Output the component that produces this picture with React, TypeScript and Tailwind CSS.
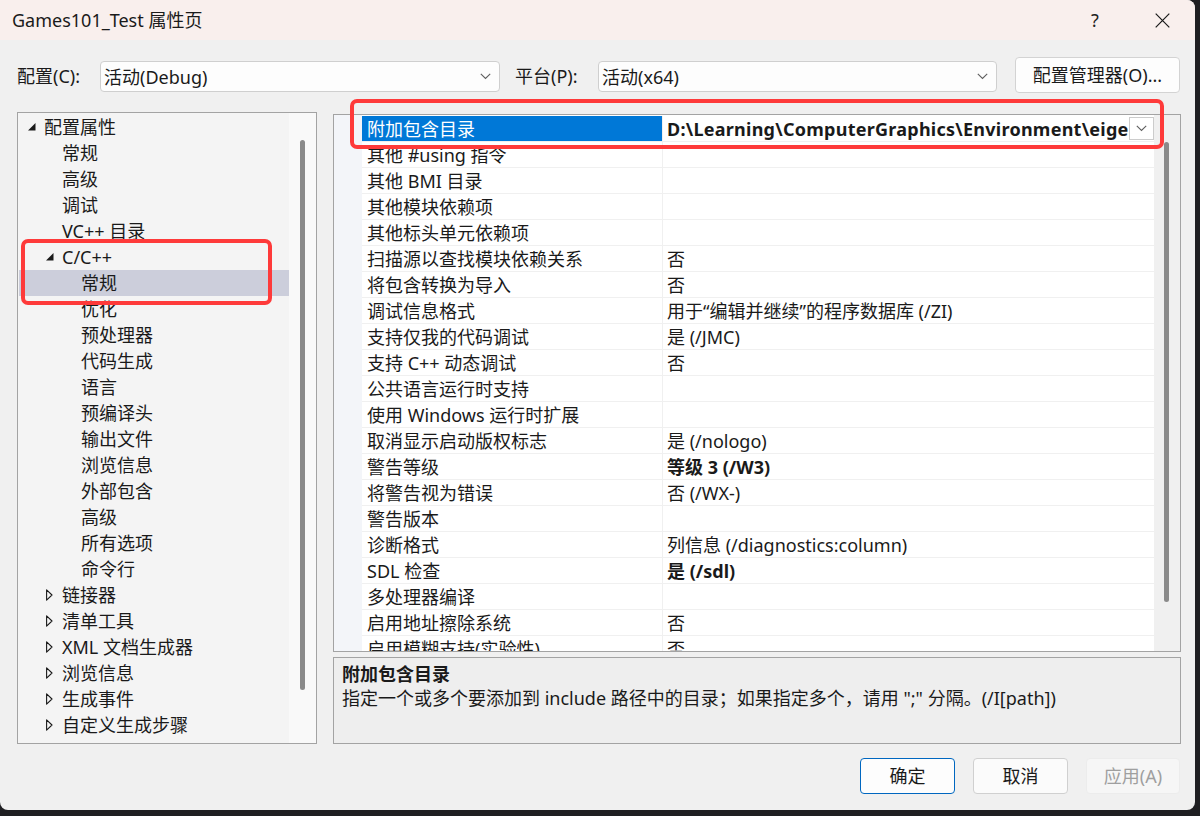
import React from 'react';

const F = "font-['Noto_Sans','Noto_Sans_CJK_SC',sans-serif]";

type TreeRow = { text: string; level: 0 | 1 | 2; icon?: 'open' | 'closed'; selected?: boolean };

const treeRows: TreeRow[] = [
  { text: '配置属性', level: 0, icon: 'open' },
  { text: '常规', level: 1 },
  { text: '高级', level: 1 },
  { text: '调试', level: 1 },
  { text: 'VC++ 目录', level: 1 },
  { text: 'C/C++', level: 1, icon: 'open' },
  { text: '常规', level: 2, selected: true },
  { text: '优化', level: 2 },
  { text: '预处理器', level: 2 },
  { text: '代码生成', level: 2 },
  { text: '语言', level: 2 },
  { text: '预编译头', level: 2 },
  { text: '输出文件', level: 2 },
  { text: '浏览信息', level: 2 },
  { text: '外部包含', level: 2 },
  { text: '高级', level: 2 },
  { text: '所有选项', level: 2 },
  { text: '命令行', level: 2 },
  { text: '链接器', level: 1, icon: 'closed' },
  { text: '清单工具', level: 1, icon: 'closed' },
  { text: 'XML 文档生成器', level: 1, icon: 'closed' },
  { text: '浏览信息', level: 1, icon: 'closed' },
  { text: '生成事件', level: 1, icon: 'closed' },
  { text: '自定义生成步骤', level: 1, icon: 'closed' },
];

const levelPad: Record<number, string> = { 0: 'pl-[9px]', 1: 'pl-[27px]', 2: 'pl-[46px]' };

type PropRow = { name: string; value?: string; bold?: boolean };

const propRows: PropRow[] = [
  { name: '附加包含目录', value: 'D:\\Learning\\ComputerGraphics\\Environment\\eigen', bold: true },
  { name: '其他 #using 指令' },
  { name: '其他 BMI 目录' },
  { name: '其他模块依赖项' },
  { name: '其他标头单元依赖项' },
  { name: '扫描源以查找模块依赖关系', value: '否' },
  { name: '将包含转换为导入', value: '否' },
  { name: '调试信息格式', value: '用于“编辑并继续”的程序数据库 (/ZI)' },
  { name: '支持仅我的代码调试', value: '是 (/JMC)' },
  { name: '支持 C++ 动态调试', value: '否' },
  { name: '公共语言运行时支持' },
  { name: '使用 Windows 运行时扩展' },
  { name: '取消显示启动版权标志', value: '是 (/nologo)' },
  { name: '警告等级', value: '等级 3 (/W3)', bold: true },
  { name: '将警告视为错误', value: '否 (/WX-)' },
  { name: '警告版本' },
  { name: '诊断格式', value: '列信息 (/diagnostics:column)' },
  { name: 'SDL 检查', value: '是 (/sdl)', bold: true },
  { name: '多处理器编译' },
  { name: '启用地址擦除系统', value: '否' },
  { name: '启用模糊支持(实验性)', value: '否' },
];

function Chevron() {
  return (
    <svg width="11" height="7" viewBox="0 0 11 7" fill="none">
      <path d="M0.8 0.8 L5.5 5.5 L10.2 0.8" stroke="#5f5f5f" strokeWidth="1.1" />
    </svg>
  );
}

function OpenTri() {
  return (
    <svg width="8" height="8" viewBox="0 0 8 8">
      <polygon points="0,7.5 7.5,7.5 7.5,0" fill="#1a1a1a" />
    </svg>
  );
}

function ClosedTri() {
  return (
    <svg width="7" height="12" viewBox="0 0 7 12" fill="none">
      <polygon points="0.6,0.8 6,6 0.6,11.2" stroke="#1a1a1a" strokeWidth="1.1" strokeLinejoin="round" />
    </svg>
  );
}

function Combo({ width, text }: { width: string; text: string }) {
  return (
    <div
      className={`${width} mt-[4px] h-[31px] flex items-center pl-[3px] pr-[8px] bg-[#fdfdfd] border border-[#cfcfcf] rounded-[4px]`}
    >
      <span className="flex-1 leading-[24px]">{text}</span>
      <Chevron />
    </div>
  );
}

export default function App() {
  return (
    <div className={`relative w-[1200px] h-[816px] overflow-hidden bg-[#1f1f22] ${F}`}>
      <div className="flex flex-col w-[1195px] h-[810px] bg-[#f0f0f0] rounded-b-[8px] rounded-tr-[8px] overflow-hidden text-[18px] text-[#1a1a1a]">
        {/* Title bar */}
        <div className="flex items-center h-[40px] shrink-0 bg-[#f9efed]">
          <span className="pl-[12px] leading-[24px]">Games101_Test 属性页</span>
          <div className="ml-auto flex items-center">
            <span className="w-[20px] text-center leading-[24px] text-[#222]">?</span>
            <div className="ml-[50px] mr-[25px] flex items-center">
              <svg width="15" height="15" viewBox="0 0 15 15" fill="none">
                <path d="M0.7 0.7 L14.3 14.3 M14.3 0.7 L0.7 14.3" stroke="#1a1a1a" strokeWidth="1.2" />
              </svg>
            </div>
          </div>
        </div>

        {/* Configuration row */}
        <div className="flex items-start h-[36px] mt-[17px] pl-[17px] shrink-0">
          <span className="w-[83px] h-[36px] pt-[2px] flex items-center">配置(C):</span>
          <Combo width="w-[400px]" text="活动(Debug)" />
          <span className="ml-[15px] w-[83px] h-[36px] pt-[2px] flex items-center">平台(P):</span>
          <Combo width="w-[399px]" text="活动(x64)" />
          <div className="ml-[18px] w-[165px] h-[36px] flex items-center justify-center bg-[#fdfdfd] border border-[#d3d3d3] rounded-[4px]">
            配置管理器(O)...
          </div>
        </div>

        {/* Main */}
        <div className="flex mt-[19px] pl-[17px] shrink-0">
          {/* Tree */}
          <div className="w-[300px] h-[632px] flex border border-[#a3a3a3] bg-[#f4f4f4]">
            <div className="w-[271px] pt-[1px] pl-[1px]">
              {treeRows.map((r, i) => (
                <div
                  key={i}
                  className={`h-[26px] flex items-center ${levelPad[r.level]} ${r.selected ? 'bg-[#cccedb]' : ''}`}
                >
                  <span className="w-[16px] h-[26px] flex items-center">
                    {r.icon === 'open' ? <OpenTri /> : r.icon === 'closed' ? <ClosedTri /> : null}
                  </span>
                  <span className="leading-[24px] whitespace-nowrap">{r.text}</span>
                </div>
              ))}
            </div>
            <div className="flex-1 bg-[#f9f9f9] pl-[11px] pt-[27px]">
              <div className="w-[5px] h-[550px] rounded-full bg-[#8a8a8a]" />
            </div>
          </div>

          {/* Right column */}
          <div className="ml-[16px] w-[848px] flex flex-col">
            {/* Property grid */}
            <div className="mt-[2px] h-[538px] flex border border-[#a3a3a3] bg-white overflow-hidden">
              <div className="w-[28px] bg-[#f3f5f9]" />
              <div className="w-[792px] pt-[1px] overflow-hidden">
                {propRows.map((r, i) => (
                  <div key={i} className="h-[26px] flex border-b border-[#f0f0f0]">
                    <div
                      className={`w-[300px] shrink-0 pl-[5px] flex items-center whitespace-nowrap ${
                        i === 0 ? 'bg-[#0078d7] text-white' : ''
                      }`}
                    >
                      <span className="leading-[24px]">{r.name}</span>
                    </div>
                    <div className="flex-1 min-w-0 border-l border-[#f0f0f0] pl-[4px] flex items-center">
                      <span
                        className={`flex-1 min-w-0 overflow-hidden whitespace-nowrap leading-[24px] ${
                          r.bold ? 'font-bold' : ''
                        } ${i === 0 ? 'tracking-[0.25px]' : ''}`}
                      >
                        {r.value ?? ''}
                      </span>
                      {i === 0 && (
                        <div className="shrink-0 w-[25px] h-[23px] flex items-center justify-center border border-[#cccccc] bg-white">
                          <Chevron />
                        </div>
                      )}
                    </div>
                  </div>
                ))}
              </div>
              <div className="flex-1 bg-[#f0f0f0] pl-[10px] pt-[27px]">
                <div className="w-[5px] h-[460px] rounded-full bg-[#8a8a8a]" />
              </div>
            </div>

            {/* Description */}
            <div className="mt-[5px] h-[87px] border border-[#a3a3a3] bg-[#eeeeee] pl-[8px] pt-[4px]">
              <div className="font-bold leading-[24px]">附加包含目录</div>
              <div className="leading-[24px] whitespace-nowrap">
                指定一个或多个要添加到 include 路径中的目录；如果指定多个，请用 ";" 分隔。(/I[path])
              </div>
            </div>
          </div>
        </div>

        {/* Buttons */}
        <div className="flex justify-end gap-[18px] mt-[14px] pr-[15px]">
          <div className="w-[95px] h-[36px] flex items-center justify-center bg-[#fdfdfd] border border-[#0067c0] rounded-[4px]">
            确定
          </div>
          <div className="w-[95px] h-[36px] flex items-center justify-center bg-[#fbfbfb] border border-[#d0d0d0] rounded-[4px]">
            取消
          </div>
          <div className="w-[94px] h-[36px] flex items-center justify-center bg-[#f6f6f6] border border-[#ececec] rounded-[4px] text-[#9f9f9f]">
            应用(A)
          </div>
        </div>
      </div>

      {/* Red annotation boxes */}
      <div className="absolute left-[21px] top-[239px] w-[251px] h-[66px] border-[4px] border-[#fe3a3a] rounded-[7px]" />
      <div className="absolute left-[350px] top-[99px] w-[814px] h-[50px] border-[4px] border-[#fe3a3a] rounded-[7px]" />
    </div>
  );
}
